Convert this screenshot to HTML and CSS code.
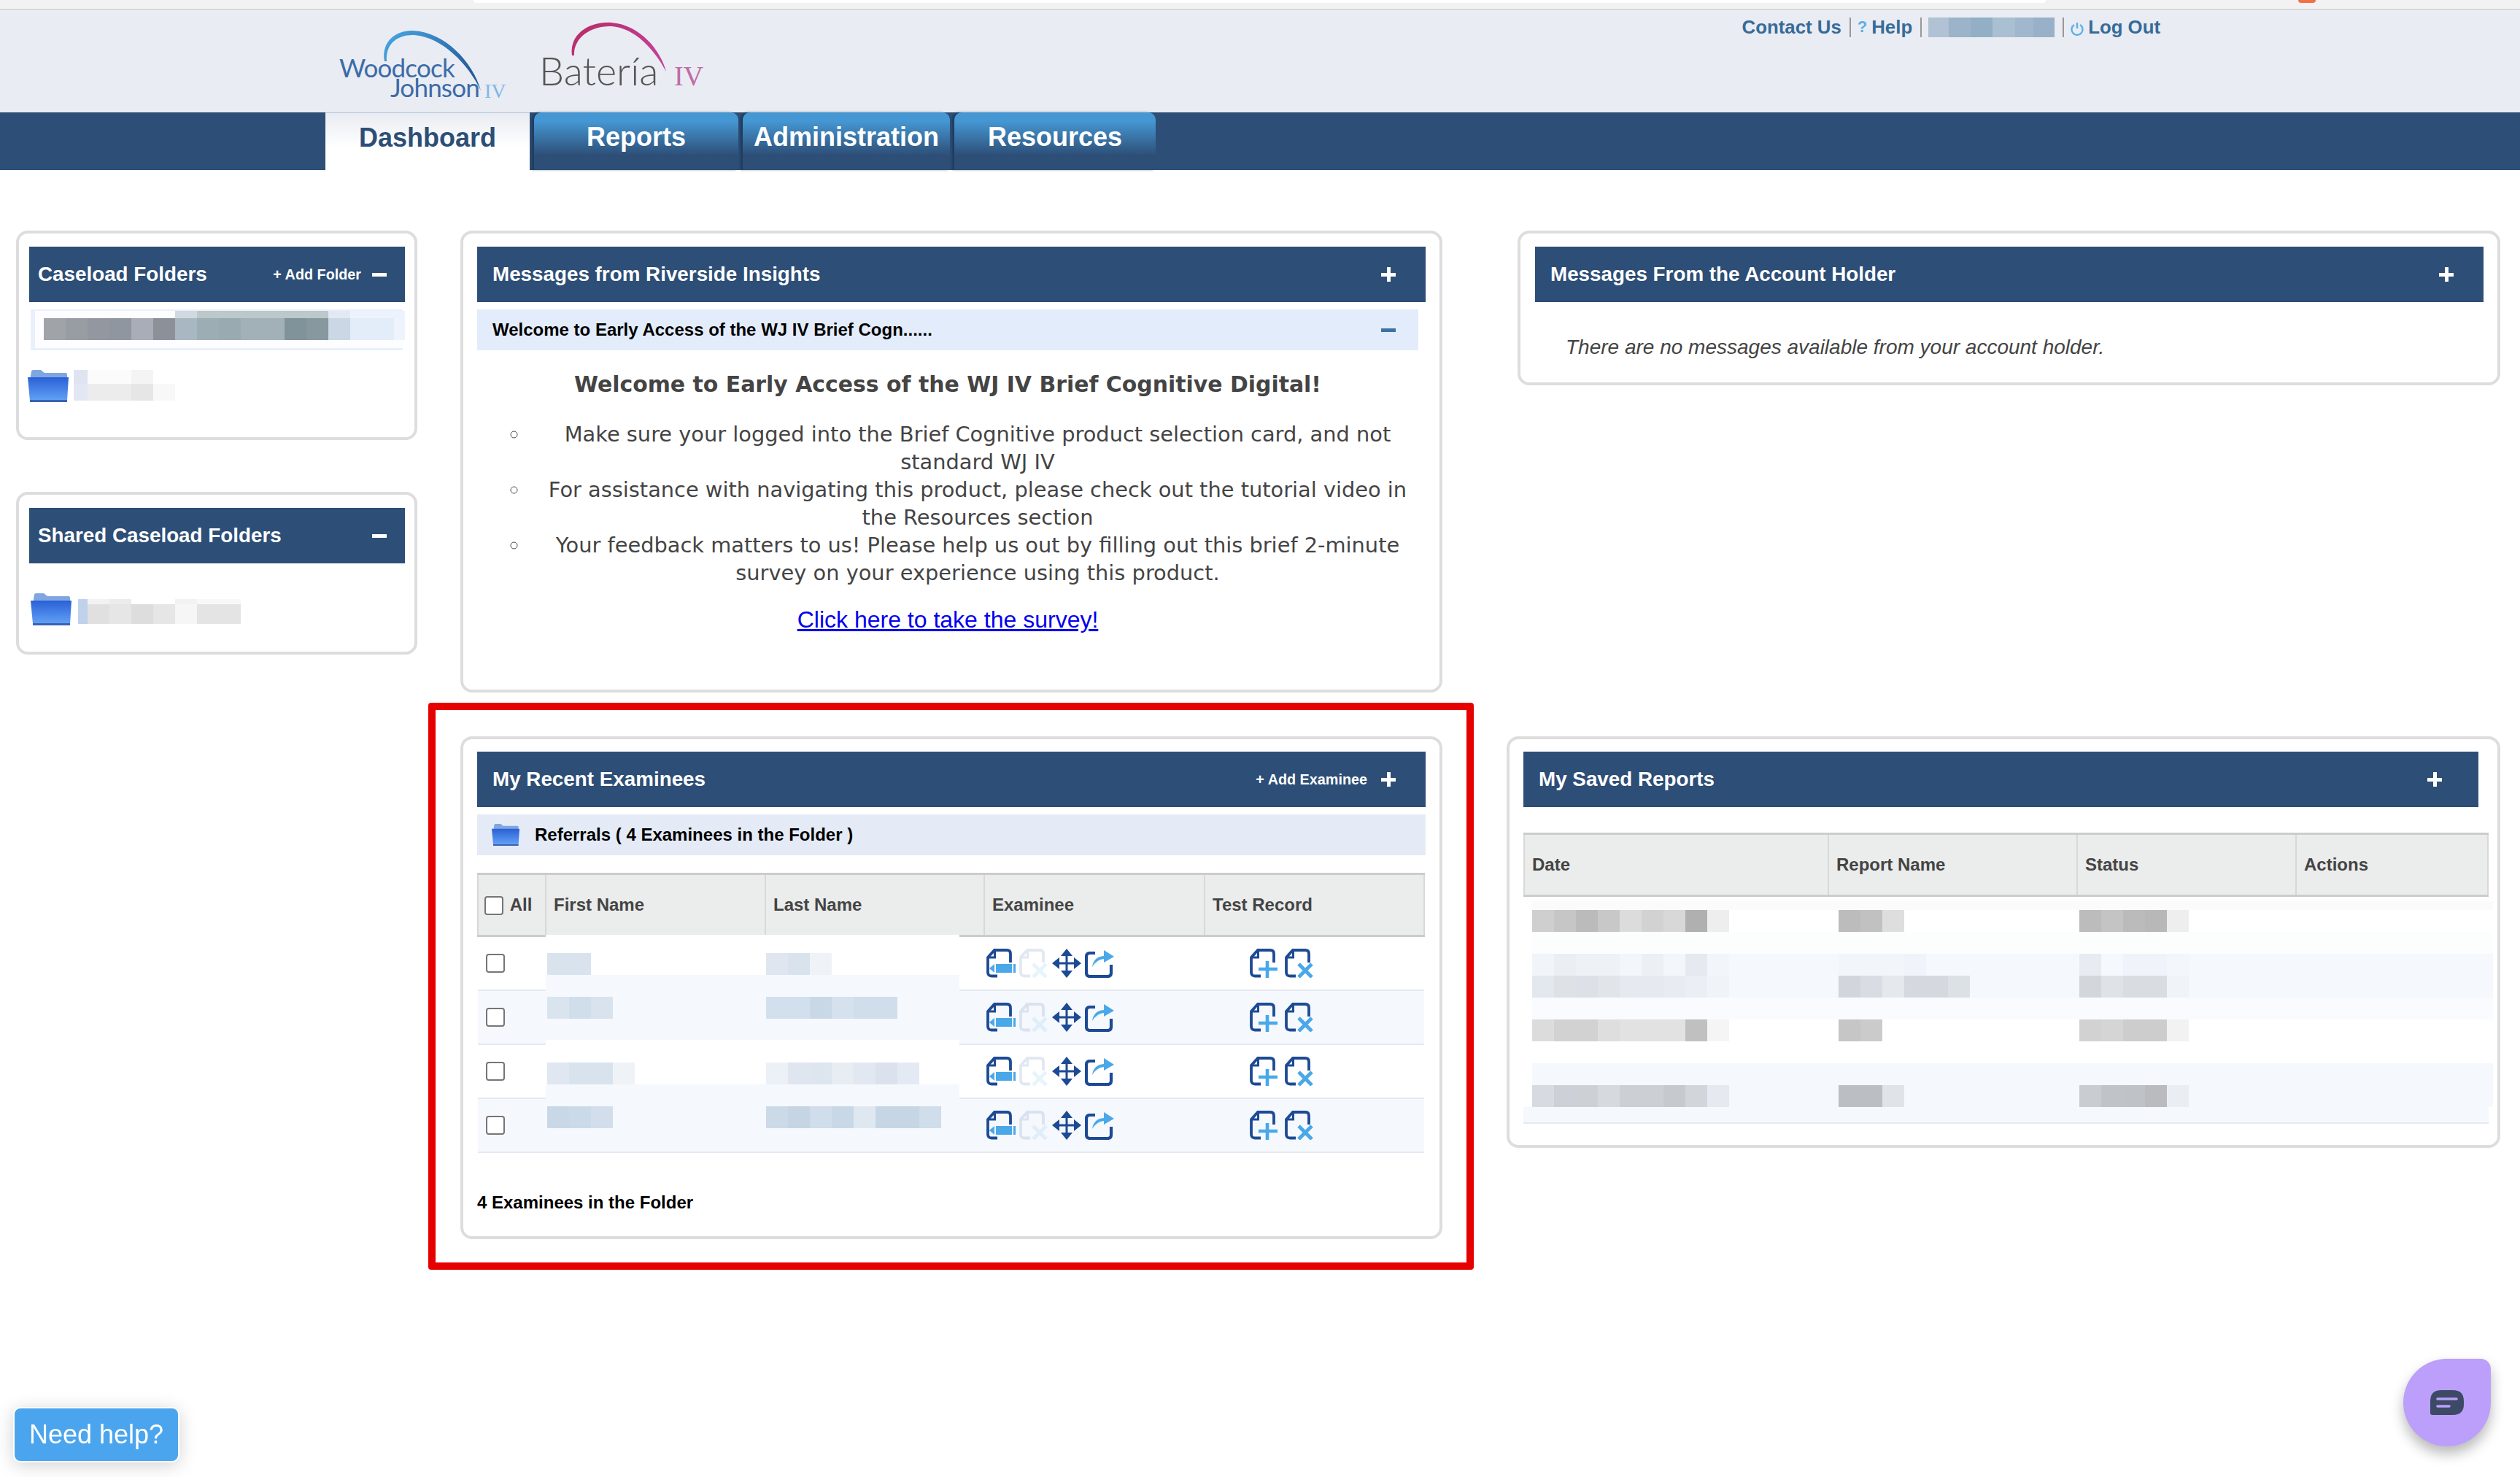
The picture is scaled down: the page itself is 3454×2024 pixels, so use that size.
FILE: index.html
```html
<!DOCTYPE html>
<html lang="en">
<head>
    <meta charset="UTF-8">
    <title>Woodcock-Johnson IV Dashboard</title>
    <link rel="stylesheet" href="styles.css">
</head>
<body>
    <!-- shared icons -->
    <svg class="icon-defs" width="0" height="0">
        <defs>
            <linearGradient id="folder-fill" x1="0" y1="0" x2="0" y2="1">
                <stop offset="0" stop-color="#2a60d6"/>
                <stop offset="1" stop-color="#62a2f6"/>
            </linearGradient>
            <symbol id="i-folder" viewBox="0 0 56 44">
                <path d="M4 8 L5 2 Q5 0 8 0 H18 L23 4 H52 Q54 4 54 6 V12 H4Z" fill="#7fa6e0"/>
                <path d="M0 10 H56 L54 42 H3Z" fill="url(#folder-fill)"/>
                <path d="M3 41 H54 V44 H3Z" fill="#3a62b4"/>
            </symbol>
            <symbol id="i-doc" viewBox="0 0 40 40">
                <path d="M15 37.500 H7 Q2 37.500 2 32.500 V12 L11 2 H28 Q33 2 33 7 V19" fill="none" stroke="#1d4a94" stroke-width="3.800"/>
                <path d="M3 12 H11.500 V3" fill="none" stroke="#1d4a94" stroke-width="3"/>
            </symbol>
            <symbol id="i-edit" viewBox="0 0 40 40">
                <use href="#i-doc"/>
                <path d="M4 27 L11 21 V33Z" fill="#4aa8e8"/>
                <path d="M13 21 H35 V33 H13Z" fill="#4aa8e8"/>
                <path d="M37 21 H40 V33 H37Z" fill="#4aa8e8"/>
            </symbol>
            <symbol id="i-add" viewBox="0 0 40 40">
                <use href="#i-doc"/>
                <path d="M24 17 V40 M12 28 H38" fill="none" stroke="#4aa8e8" stroke-width="4.600"/>
            </symbol>
            <symbol id="i-remove" viewBox="0 0 40 40">
                <use href="#i-doc"/>
                <path d="M19 21 L37 39 M37 21 L19 39" fill="none" stroke="#4aa8e8" stroke-width="5"/>
            </symbol>
            <symbol id="i-move" viewBox="0 0 40 40">
                <path d="M20 0 L28 10 H12Z M20 40 L28 30 H12Z M0 20 L10 12 V28Z M40 20 L30 12 V28Z" fill="#1d4a94"/>
                <path d="M20 6 V34 M6 20 H34" fill="none" stroke="#1d4a94" stroke-width="3"/>
            </symbol>
            <symbol id="i-share" viewBox="0 0 40 40">
                <path d="M14 6 H7 Q2 6 2 11 V33 Q2 38 7 38 H31 Q36 38 36 33 V22" fill="none" stroke="#1d4a94" stroke-width="4.200"/>
                <path d="M10 25 Q12 11 26 10 V2 L40 11 L26 19 V14 Q16 15 10 25Z" fill="#4aa8e8"/>
            </symbol>
        </defs>
    </svg>

    <header class="site-header">
        <div class="browser-strip">
            <span class="strip-tab"></span>
            <span class="strip-dot"></span>
        </div>
        <div class="brand-bar">
            <svg class="logos" viewBox="460 14 510 140" width="510" height="140">
                <defs>
                    <linearGradient id="arc-blue" x1="0" y1="0" x2="1" y2="0.500">
                        <stop offset="0" stop-color="#48a8e4"/>
                        <stop offset="1" stop-color="#255c9c"/>
                    </linearGradient>
                    <linearGradient id="arc-pink" x1="0" y1="0" x2="1" y2="0.500">
                        <stop offset="0" stop-color="#b82c66"/>
                        <stop offset="1" stop-color="#c43f98"/>
                    </linearGradient>
                </defs>
                <path d="M527 84 C522 55 545 41 566 42 C610 44 648 85 659 124 C642 88 606 51 568 48 C545 47 528 60 530 84Z" fill="url(#arc-blue)"/>
                <text class="logo-wj" x="465" y="106">Woodcock</text>
                <text class="logo-wj" x="535" y="133">Johnson</text>
                <text class="logo-iv logo-iv-blue" x="664" y="134">IV</text>
                <path d="M784 76 C780 45 810 29 838 31 C878 34 906 70 913 98 C897 68 870 38 838 36 C812 35 786 50 787 76Z" fill="url(#arc-pink)"/>
                <text class="logo-bat" x="739" y="117">Batería</text>
                <text class="logo-iv logo-iv-pink" x="924" y="117">IV</text>
            </svg>
            <nav class="top-links">
                <a class="top-link">Contact Us</a>
                <span class="top-sep"></span>
                <a class="top-link"><span class="help-mark">?</span> Help</a>
                <span class="top-sep"></span>
                <span class="mosaic m-user"></span>
                <span class="top-sep"></span>
                <a class="top-link">
                    <svg class="power" viewBox="0 0 18 20" width="18" height="20"><path d="M5 5 A7.500 7.500 0 1 0 13 5 M9 2 V10" fill="none" stroke="#5ab0e8" stroke-width="2.400"/></svg>
                    Log Out
                </a>
            </nav>
        </div>
        <div class="main-nav">
            <a class="nav-tab nav-current">Dashboard</a>
            <a class="nav-tab nav-reports">Reports</a>
            <a class="nav-tab nav-admin">Administration</a>
            <a class="nav-tab nav-resources">Resources</a>
        </div>
    </header>

    <main class="dashboard">
        <div class="left-col">
            <section class="card card-caseload">
                <div class="panel-head">
                    <h2>Caseload Folders</h2>
                    <span class="head-action">+ Add Folder</span>
                    <span class="toggle toggle-minus"></span>
                </div>
                <div class="caseload-select"><span class="mosaic m-select"></span></div>
                <div class="folder-row">
                    <svg class="folder" width="56" height="44"><use href="#i-folder"/></svg>
                    <span class="mosaic m-folder-a"></span>
                </div>
            </section>
            <section class="card card-shared">
                <div class="panel-head">
                    <h2>Shared Caseload Folders</h2>
                    <span class="toggle toggle-minus"></span>
                </div>
                <div class="folder-row folder-row-shared">
                    <svg class="folder" width="56" height="44"><use href="#i-folder"/></svg>
                    <span class="mosaic m-folder-b"></span>
                </div>
            </section>
        </div>

        <section class="card card-messages">
            <div class="panel-head">
                <h2>Messages from Riverside Insights</h2>
                <span class="toggle toggle-plus"></span>
            </div>
            <div class="sub-head">
                <span>Welcome to Early Access of the WJ IV Brief Cogn......</span>
                <span class="toggle toggle-small"></span>
            </div>
            <div class="message-body">
                <h3>Welcome to Early Access of the WJ IV Brief Cognitive Digital!</h3>
                <ul>
                    <li><span>Make sure your logged into the Brief Cognitive product selection card, and not standard WJ IV</span></li>
                    <li><span>For assistance with navigating this product, please check out the tutorial video in the Resources section</span></li>
                    <li><span>Your feedback matters to us! Please help us out by filling out this brief 2-minute survey on your experience using this product.</span></li>
                </ul>
                <p class="survey"><a href="#">Click here to take the survey!</a></p>
            </div>
        </section>

        <section class="card card-account">
            <div class="panel-head">
                <h2>Messages From the Account Holder</h2>
                <span class="toggle toggle-plus"></span>
            </div>
            <p class="no-messages">There are no messages available from your account holder.</p>
        </section>

        <div class="annotated">
            <section class="card card-examinees">
                <div class="panel-head">
                    <h2>My Recent Examinees</h2>
                    <span class="head-action">+ Add Examinee</span>
                    <span class="toggle toggle-plus"></span>
                </div>
                <div class="folder-bar">
                    <svg class="folder-small" width="38" height="30"><use href="#i-folder"/></svg>
                    <span>Referrals ( 4 Examinees in the Folder )</span>
                </div>
                <div class="table-wrap">
                    <table class="grid examinee-grid">
                        <thead>
                            <tr>
                                <th class="col-check"><input type="checkbox" class="check"> All</th>
                                <th class="col-first">First Name</th>
                                <th class="col-last">Last Name</th>
                                <th class="col-exam">Examinee</th>
                                <th>Test Record</th>
                            </tr>
                        </thead>
                        <tbody>
                            <tr>
                                <td class="cell-check"><input type="checkbox" class="check"></td><td></td><td></td>
                                <td><div class="icons icons-exam"><svg width="40" height="40"><use href="#i-edit"/></svg><svg class="faded" width="40" height="40"><use href="#i-remove"/></svg><svg width="40" height="40"><use href="#i-move"/></svg><svg width="40" height="40"><use href="#i-share"/></svg></div></td>
                                <td><div class="icons icons-test"><svg width="40" height="40"><use href="#i-add"/></svg><svg width="40" height="40"><use href="#i-remove"/></svg></div></td>
                            </tr>
                            <tr>
                                <td class="cell-check"><input type="checkbox" class="check"></td><td></td><td></td>
                                <td><div class="icons icons-exam"><svg width="40" height="40"><use href="#i-edit"/></svg><svg class="faded" width="40" height="40"><use href="#i-remove"/></svg><svg width="40" height="40"><use href="#i-move"/></svg><svg width="40" height="40"><use href="#i-share"/></svg></div></td>
                                <td><div class="icons icons-test"><svg width="40" height="40"><use href="#i-add"/></svg><svg width="40" height="40"><use href="#i-remove"/></svg></div></td>
                            </tr>
                            <tr>
                                <td class="cell-check"><input type="checkbox" class="check"></td><td></td><td></td>
                                <td><div class="icons icons-exam"><svg width="40" height="40"><use href="#i-edit"/></svg><svg class="faded" width="40" height="40"><use href="#i-remove"/></svg><svg width="40" height="40"><use href="#i-move"/></svg><svg width="40" height="40"><use href="#i-share"/></svg></div></td>
                                <td><div class="icons icons-test"><svg width="40" height="40"><use href="#i-add"/></svg><svg width="40" height="40"><use href="#i-remove"/></svg></div></td>
                            </tr>
                            <tr>
                                <td class="cell-check"><input type="checkbox" class="check"></td><td></td><td></td>
                                <td><div class="icons icons-exam"><svg width="40" height="40"><use href="#i-edit"/></svg><svg class="faded" width="40" height="40"><use href="#i-remove"/></svg><svg width="40" height="40"><use href="#i-move"/></svg><svg width="40" height="40"><use href="#i-share"/></svg></div></td>
                                <td><div class="icons icons-test"><svg width="40" height="40"><use href="#i-add"/></svg><svg width="40" height="40"><use href="#i-remove"/></svg></div></td>
                            </tr>
                        </tbody>
                    </table>
                    <!-- names are pixelated over the table -->
                    <div class="names-cover">
                        <div class="name-band band-1"><span class="mosaic m-f1"></span><span class="mosaic m-l1"></span></div>
                        <div class="name-band band-2"><span class="mosaic m-f2"></span><span class="mosaic m-l2"></span></div>
                        <div class="name-band band-3"><span class="mosaic m-f3"></span><span class="mosaic m-l3"></span></div>
                        <div class="name-band band-4"><span class="mosaic m-f4"></span><span class="mosaic m-l4"></span></div>
                    </div>
                </div>
                <p class="folder-count">4 Examinees in the Folder</p>
            </section>
        </div>

        <section class="card card-reports">
            <div class="panel-head">
                <h2>My Saved Reports</h2>
                <span class="toggle toggle-plus"></span>
            </div>
            <table class="grid report-grid">
                <thead>
                    <tr>
                        <th class="col-date">Date</th>
                        <th class="col-report">Report Name</th>
                        <th class="col-status">Status</th>
                        <th>Actions</th>
                    </tr>
                </thead>
            </table>
            <div class="report-rows">
                <div class="r-band r-first"></div>
                <div class="r-line"><span class="mosaic m-d1"></span><span class="mosaic m-n1"></span><span class="mosaic m-s1"></span></div>
                <div class="r-band r-after-first"></div>
                <div class="r-line r-tint"><span class="mosaic m-d2"></span><span class="mosaic m-n2"></span><span class="mosaic m-s2"></span></div>
                <div class="r-band r-soft"></div>
                <div class="r-line"><span class="mosaic m-d3"></span><span class="mosaic m-n3"></span><span class="mosaic m-s3"></span></div>
                <div class="r-band r-plain"></div>
                <div class="r-band r-tint-gap"></div>
                <div class="r-line r-tint"><span class="mosaic m-d4"></span><span class="mosaic m-n4"></span><span class="mosaic m-s4"></span></div>
                <div class="r-end"></div>
            </div>
        </section>
    </main>

    <a class="need-help">Need help?</a>
    <a class="chat-bubble">
        <svg viewBox="0 0 46 34" width="46" height="34">
            <path d="M0 15 Q0 0 15 0 H31 Q46 0 46 15 V19 Q46 34 31 34 H3 Q0 34 0 31Z" fill="#3c4a66"/>
            <path d="M10 12 H36 M10 22 H26" fill="none" stroke="#bc9ffb" stroke-width="3.600" stroke-linecap="round"/>
        </svg>
    </a>
</body>
</html>
```

FILE: styles.css
```css
html, body {
    margin: 0;
    padding: 0;
    background-color: #fff;
}

body {
    height: 2024px;
    overflow: hidden;
    font-family: "Liberation Sans", Arial, sans-serif;
}

.icon-defs {
    position: absolute;
}

/* header */
.browser-strip {
    display: flex;
    height: 12px;
    background-color: #f2f2f2;
    border-bottom: 2px solid #d8d8da;
}

.strip-tab {
    width: 2155px;
    height: 4px;
    margin-left: 649px;
    background-color: #fff;
    border-radius: 0 0 6px 6px;
}

.strip-dot {
    width: 24px;
    height: 4px;
    margin-left: 346px;
    background-color: #f4704a;
    border-radius: 0 0 4px 4px;
}

.brand-bar {
    display: flex;
    justify-content: space-between;
    height: 140px;
    background-color: #e9ecf2;
}

.logos {
    margin-left: 460px;
}

.logo-wj {
    font-family: Lato, sans-serif;
    font-size: 35px;
    font-weight: 400;
    letter-spacing: -0.8px;
    fill: #3c6ba8;
}

.logo-bat {
    font-family: Lato, sans-serif;
    font-size: 54px;
    font-weight: 300;
    fill: #555;
}

.logo-iv {
    font-family: "Liberation Serif", serif;
}

.logo-iv-blue {
    font-size: 28px;
    fill: #7db8e8;
}

.logo-iv-pink {
    font-size: 38px;
    fill: #c26aa8;
}

.top-links {
    display: flex;
    align-items: flex-start;
    margin-right: 493px;
    padding-top: 5px;
}

.top-link {
    display: flex;
    align-items: center;
    gap: 6px;
    height: 36px;
    font-size: 25.800px;
    font-weight: bold;
    color: #366b99;
}

.help-mark {
    color: #5ab0e8;
    font-size: 22px;
}

.power {
    margin-top: 4px;
}

.top-sep {
    width: 2px;
    height: 27px;
    margin: 5px 9px 0 11px;
    background-color: #999;
}

.main-nav {
    display: flex;
    gap: 6px;
    height: 79px;
    padding-left: 446px;
    background-color: #2d4e76;
}

.nav-tab {
    display: flex;
    justify-content: center;
    padding-top: 13px;
    box-sizing: border-box;
    width: 280px;
    font-size: 36px;
    font-weight: bold;
    color: #fff;
    background: linear-gradient(#4597d3 0, #4597d3 15%, #2d4e76 75%);
    border-radius: 10px 10px 0 0;
    box-shadow: -3px 0 3px rgba(20, 40, 70, 0.5);
}

.nav-current {
    color: #2d4e76;
    background: linear-gradient(#e9ecf2, #fff 60%);
    border-top: 1px solid #b8c6dc;
    border-radius: 0;
    box-shadow: none;
}

.nav-admin {
    width: 284px;
}

.nav-resources {
    width: 276px;
}

/* page grid */
.dashboard {
    display: grid;
    grid-template-columns: 550px 1346px 1391px;
    grid-template-rows: 633px auto;
    column-gap: 59px;
    row-gap: 60px;
    align-items: start;
    padding: 83px 0 0 22px;
}

.left-col {
    grid-row: 1 / 3;
    display: flex;
    flex-direction: column;
    gap: 71px;
}

.card {
    box-sizing: border-box;
    padding: 18px 19px 0;
    background-color: #fff;
    border: 4px solid #ddd;
    border-radius: 16px;
}

.panel-head {
    display: flex;
    align-items: center;
    height: 76px;
    padding: 0 41px 0 21px;
    background-color: #2d4e76;
    color: #fff;
}

.panel-head h2 {
    margin: 0 auto 0 0;
    font-size: 27.800px;
    font-weight: bold;
}

.head-action {
    margin-right: 15px;
    font-size: 19.800px;
    font-weight: bold;
}

.toggle {
    width: 20px;
    height: 20px;
    background-repeat: no-repeat;
    background-position: center;
}

.toggle-minus {
    background-image: linear-gradient(#fff, #fff);
    background-size: 20px 5px;
}

.toggle-plus {
    background-image: linear-gradient(#fff, #fff), linear-gradient(#fff, #fff);
    background-size: 20px 5px, 5px 20px;
}

.toggle-small {
    background-image: linear-gradient(#3f719f, #3f719f);
    background-size: 20px 5px;
}

/* left column */
.card-caseload {
    height: 287px;
    padding: 18px 13px 0 14px;
}

.card-caseload .panel-head,
.card-shared .panel-head {
    padding: 0 25px 0 12px;
}

.card-shared {
    height: 223px;
    padding: 18px 13px 0 14px;
}

.caseload-select {
    box-sizing: border-box;
    height: 56px;
    margin: 10px 3px 0 2px;
    padding-left: 12px;
    border-style: solid;
    border-color: #e8f0fc;
    border-width: 2px 0 3px 6px;
    background-color: #fdfdff;
}

.folder-row {
    display: flex;
    align-items: flex-start;
    margin: 27px 0 0 -2px;
    gap: 7px;
}

.folder-row-shared {
    margin: 41px 0 0 2px;
    gap: 9px;
}

.folder {
    flex: none;
}

.mosaic {
    display: block;
    flex: none;
    height: 30px;
}

.m-select {
    width: 495px;
    height: 40px;
    background:
        linear-gradient(90deg, #fdfdff 180px, #d0d9e0 0 210px, #bcc8c9 0 390px, #e3e9f4 0 420px, #edf3fc 0) top / 100% 10px no-repeat,
        linear-gradient(90deg, #a0a3a8 30px, #989ca3 0 60px, #93979f 0 90px, #8f96a0 0 120px, #a8adb7 0 150px, #8c9199 0 180px, #a9b7c2 0 210px, #9dadb4 0 240px, #99aab0 0 270px, #a2b1b7 0 330px, #80929a 0 360px, #87989f 0 390px, #cad7e4 0 420px, #e3ecf9 0 480px, #eef3fc 0);
}

.m-folder-a {
    width: 139px;
    height: 42px;
    background:
        linear-gradient(90deg, #dfe4f0 19px, #fbfbfb 0 79px, #f4f4f4 0 109px, #fff 0) top / 100% 19px no-repeat,
        linear-gradient(90deg, #e2e7f3 19px, #ececec 0 79px, #e6e6e6 0 109px, #f8f8f8 0);
}

.m-folder-b {
    width: 223px;
    height: 34px;
    margin-top: 8px;
    background:
        linear-gradient(90deg, #c0d1ec 13px, #f2f2f2 0 43px, #ececec 0 73px, #fff 0 133px, #f2f2f2 0 163px, #f8f8f8 0) top / 100% 7px no-repeat,
        linear-gradient(90deg, #c0d1ec 13px, #e0e0e0 0 43px, #e6e6e6 0 73px, #ddd 0 103px, #e6e6e6 0 133px, #f6f6f6 0 163px, #e4e4e4 0);
}

.m-user {
    width: 173px;
    height: 27px;
    margin-top: 5px;
    background: linear-gradient(90deg, #b0c2d3 28px, #9cb4c9 0 58px, #93afc6 0 88px, #a9bfd2 0 119px, #a1b7cd 0 144px, #98b1c8 0);
}

/* messages */
.card-messages {
    height: 633px;
}

.sub-head {
    display: flex;
    justify-content: space-between;
    align-items: center;
    width: 1290px;
    box-sizing: border-box;
    height: 56px;
    margin-top: 10px;
    padding: 0 31px 0 21px;
    background-color: #e3ecfa;
    font-size: 24px;
    font-weight: bold;
    color: #000;
}

.message-body {
    color: #444;
    font-family: "DejaVu Sans", sans-serif;
}

.message-body h3 {
    margin: 25px 0 0;
    padding-right: 10px;
    text-align: center;
    font-size: 29.900px;
    line-height: 44px;
    font-weight: bold;
}

.message-body ul {
    margin: 27px 0 0;
    padding: 0 14px 0 71px;
    list-style: circle;
    font-size: 28.850px;
    line-height: 38px;
    text-align: center;
}

.message-body li span {
    display: block;
    padding-left: 15px;
}

.survey {
    margin: 26px 0 0;
    padding-right: 10px;
    text-align: center;
    font-family: "Liberation Sans", Arial, sans-serif;
    font-size: 32px;
    line-height: 38px;
}

.survey a {
    color: #00e;
}

.card-account {
    height: 212px;
    margin-left: 44px;
    padding: 18px 19px 0 20px;
}

.no-messages {
    margin: 46px 0 0 42px;
    font-size: 28px;
    font-style: italic;
    color: #444;
}

/* examinees */
.annotated {
    position: relative;
}

.annotated::after {
    content: "";
    position: absolute;
    top: -46px;
    right: -43px;
    bottom: -42px;
    left: -44px;
    border: 10px solid #e60000;
    border-radius: 4px;
    pointer-events: none;
}

.card-examinees {
    height: 689px;
    padding-top: 17px;
}

.card-examinees .head-action {
    margin-right: 19px;
}

.folder-bar {
    display: flex;
    align-items: center;
    gap: 21px;
    height: 56px;
    margin-top: 10px;
    padding-left: 20px;
    background-color: #e5ebf6;
    font-size: 24px;
    font-weight: bold;
    color: #000;
}

.table-wrap {
    position: relative;
    margin-top: 24px;
}

.grid {
    table-layout: fixed;
    border-collapse: collapse;
    width: 1299px;
}

.grid th {
    box-sizing: border-box;
    height: 85px;
    padding: 0 10px;
    background-color: #ebecec;
    border-top: 3px solid #ccc;
    border-bottom: 3px solid #ccc;
    border-left: 2px solid #d8d8d8;
    border-right: 2px solid #d8d8d8;
    text-align: left;
    font-size: 24px;
    font-weight: bold;
    color: #444;
}

.col-check {
    width: 93px;
}

.col-first {
    width: 301px;
}

.col-last {
    width: 300px;
}

.col-exam {
    width: 302px;
}

.examinee-grid td {
    height: 74px;
    box-sizing: border-box;
    padding: 0;
    border-bottom: 2px solid #e5e9f0;
}

.examinee-grid tbody tr:nth-child(even) td {
    background-color: #f5f8fd;
}

.check {
    width: 26px;
    height: 26px;
    margin: 0;
    vertical-align: middle;
    appearance: none;
    background-color: #fff;
    border: 2px solid #767676;
    border-radius: 4px;
}

.col-check .check {
    margin: 0 3px 0 -2px;
}

.cell-check {
    padding-left: 11px !important;
}

.icons {
    display: flex;
}

.icons-exam {
    gap: 5px;
    padding-left: 3px;
}

.icons-test {
    gap: 8px;
    padding-left: 62px;
}

.faded {
    opacity: 0.12;
}

.names-cover {
    position: absolute;
    top: 85px;
    left: 94px;
    width: 567px;
}

.name-band {
    display: grid;
    grid-template-columns: 300px 1fr;
    box-sizing: border-box;
    padding-left: 2px;
    background-color: #fff;
}

.band-1 {
    height: 55px;
    padding-top: 25px;
}

.band-2 {
    height: 89px;
    padding-top: 30px;
    background-color: #f5f8fd;
}

.band-3 {
    height: 61px;
    padding-top: 31px;
}

.band-4 {
    height: 89px;
    padding-top: 30px;
    background-color: #f5f8fd;
}

.m-f1 { width: 60px; background: #d9e3ee; }
.m-l1 { width: 90px; background: linear-gradient(90deg, #dfe6f0 30px, #d9e3ee 0 60px, #eff3f8 0); }
.m-f2 { width: 90px; background: linear-gradient(90deg, #dae4ef 30px, #d0deeb 0 60px, #d8e3ee 0); }
.m-l2 { width: 180px; background: linear-gradient(90deg, #d2dfec 60px, #c9d8e6 0 90px, #d5e1ed 0 120px, #d0deeb 0); }
.m-f3 { width: 120px; background: linear-gradient(90deg, #e0e7f0 30px, #d9e3ee 0 90px, #eff3f8 0); }
.m-l3 { width: 210px; background: linear-gradient(90deg, #ecf0f7 30px, #dfe6f0 0 60px, #dde5ef 0 90px, #e8edf4 0 120px, #e2e8f1 0 150px, #dbe2ed 0 180px, #e4eaf3 0); }
.m-f4 { width: 90px; background: linear-gradient(90deg, #c9d8e7 30px, #cbdae8 0 60px, #d2deeb 0); }
.m-l4 { width: 240px; background: linear-gradient(90deg, #ccdae8 30px, #c5d5e4 0 60px, #d0ddea 0 90px, #c9d8e6 0 120px, #dfe8f1 0 150px, #c6d6e5 0 210px, #d0ddea 0); }

.folder-count {
    margin: 54px 0 0;
    font-size: 24px;
    font-weight: bold;
    color: #000;
}

/* saved reports */
.card-reports {
    height: 564px;
    margin-left: 29px;
    padding: 17px 12px 0 19px;
}

.card-reports .panel-head {
    width: 1309px;
    box-sizing: border-box;
    padding-right: 50px;
}

.report-grid {
    width: 1323px;
    margin-top: 35px;
}

.col-date {
    width: 417px;
}

.col-report {
    width: 341px;
}

.col-status {
    width: 300px;
}

.report-rows {
    margin: 6px 0 0 12px;
    width: 1317px;
}

.r-first {
    height: 12px;
    background-color: #fbfbfb;
}

.r-line {
    display: flex;
}

.r-line .mosaic:nth-child(2) {
    margin-left: 150px;
}

.m-d1, .m-d3, .m-d4 {
    width: 270px;
}

.m-d2 {
    width: 270px;
    height: 60px;
}

.m-n1, .m-n2, .m-n3, .m-n4 {
    width: 180px;
}

.m-s1, .m-s2, .m-s3, .m-s4 {
    width: 150px;
    margin-left: 150px;
}

.m-s2, .m-n2 {
    height: 60px;
}

.m-d1 { background: linear-gradient(90deg, #cfcfcf 30px, #c6c6c6 0 60px, #bbb 0 90px, #c8c8c8 0 120px, #dcdcdc 0 150px, #d2d2d2 0 180px, #d8d8d8 0 210px, #b0b0b0 0 240px, #eee 0); }
.m-n1 { background: linear-gradient(90deg, #bcbcbc 30px, #c1c1c1 0 60px, #dedede 0 90px, #fff 0); }
.m-s1 { background: linear-gradient(90deg, #bcbcbc 30px, #c4c4c4 0 60px, #bbb 0 90px, #b8b8b8 0 120px, #eee 0); }
.m-d2 { background: linear-gradient(90deg, #f1f4f9 30px, #ebeef3 0 60px, #eef1f6 0 120px, #f3f6fb 0 150px, #eceff4 0 180px, #f3f6fb 0 210px, #e6e9ef 0 240px, #f2f5fa 0) top / 100% 30px no-repeat, linear-gradient(90deg, #e3e7ee 30px, #dee2e7 0 60px, #dde1e7 0 90px, #e1e5ea 0 120px, #e6e9ef 0 180px, #e8ebf1 0 210px, #ebeef4 0 240px, #f0f3f8 0); }
.m-n2 { background: linear-gradient(90deg, #f2f5fa 90px, #f0f3f9 0 120px, #f5f8fd 0) top / 100% 30px no-repeat, linear-gradient(90deg, #d2d6dc 30px, #d9dde3 0 60px, #e5e9ee 0 90px, #d5d9df 0 150px, #dce1e6 0); }
.m-s2 { background: linear-gradient(90deg, #e8ebf1 30px, #f5f8fd 0 60px, #f0f3f9 0 120px, #f3f6fb 0) top / 100% 30px no-repeat, linear-gradient(90deg, #d3d7dc 30px, #dfe3e8 0 60px, #d9dde2 0 120px, #f0f3f8 0); }
.m-d3 { background: linear-gradient(90deg, #dcdcdc 30px, #d2d2d2 0 90px, #dedede 0 120px, #e2e2e2 0 210px, #c0c0c0 0 240px, #f5f5f5 0); }
.m-n3 { background: linear-gradient(90deg, #c6c6c6 30px, #cbcbcb 0 60px, #fff 0); }
.m-s3 { background: linear-gradient(90deg, #d2d2d2 30px, #d5d5d5 0 60px, #cdcdcd 0 120px, #f2f2f2 0); }
.m-d4 { background: linear-gradient(90deg, #d7dbe1 30px, #cdd0d6 0 60px, #cdd1d5 0 90px, #d6d9dd 0 120px, #ccd0d4 0 180px, #c6cacf 0 210px, #d2d6da 0 240px, #e6e9ef 0); }
.m-n4 { background: linear-gradient(90deg, #bbbec2 60px, #e0e4e8 0 90px, #f5f8fd 0); }
.m-s4 { background: linear-gradient(90deg, #c9cdd1 30px, #c0c4c8 0 60px, #bfc2c6 0 90px, #b9bbbf 0 120px, #eaedf2 0); }

.r-after-first {
    height: 30px;
    background-color: #fcfdfd;
}

.r-tint {
    background-color: #f5f8fd;
}

.r-soft {
    height: 30px;
    background-color: #fafbfe;
}

.r-plain {
    height: 30px;
}

.r-tint-gap {
    height: 30px;
    background-color: #f5f8fd;
}

.r-end {
    box-sizing: border-box;
    width: 1323px;
    height: 23px;
    margin-left: -12px;
    background-color: #f5f8fd;
    border-bottom: 2px solid #e5eaf0;
}

/* floating widgets */
.need-help {
    position: fixed;
    left: 18px;
    bottom: 20px;
    box-sizing: border-box;
    width: 228px;
    height: 76px;
    line-height: 72px;
    text-align: center;
    font-size: 36px;
    color: #fff;
    background-color: #4ba5ee;
    border: 2px solid #fff;
    border-radius: 10px;
    box-shadow: 0 4px 24px rgba(0, 0, 0, 0.18);
}

.chat-bubble {
    position: fixed;
    left: 3294px;
    top: 1862px;
    display: flex;
    justify-content: center;
    align-items: center;
    width: 120px;
    height: 120px;
    background-color: #bc9ffb;
    border-radius: 60px 14px 60px 60px;
    box-shadow: 0 10px 18px rgba(0, 0, 0, 0.28);
}
```
